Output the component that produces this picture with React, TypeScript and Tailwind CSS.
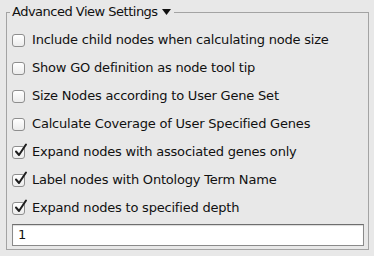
import React from 'react';

const options = [
  { label: 'Include child nodes when calculating node size', checked: false },
  { label: 'Show GO definition as node tool tip', checked: false },
  { label: 'Size Nodes according to User Gene Set', checked: false },
  { label: 'Calculate Coverage of User Specified Genes', checked: false },
  { label: 'Expand nodes with associated genes only', checked: true },
  { label: 'Label nodes with Ontology Term Name', checked: true },
  { label: 'Expand nodes to specified depth', checked: true },
];

function Check({ checked }: { checked: boolean }) {
  return (
    <span className="relative flex h-[13px] w-[13px] shrink-0 rounded-[3px] border border-[#8e8e8e] bg-gradient-to-b from-white to-[#ececec] shadow-[inset_0_1px_0_#fff]">
      {checked && (
        <svg className="absolute -top-[4px] left-[1px]" width="14" height="15" viewBox="0 0 14 15">
          <path d="M2 8.5 L5 12 L12 1.5" fill="none" stroke="#1e1e1e" strokeWidth="2" strokeLinecap="round" strokeLinejoin="round" />
        </svg>
      )}
    </span>
  );
}

export default function App() {
  return (
    <div className="h-[256px] w-[374px] overflow-hidden bg-[#e8e8e8] pt-[4px] pl-[6px] text-[13px] tracking-[-0.2px] text-[#111] [font-family:'DejaVu_Sans',sans-serif]">
      <fieldset className="m-0 h-[246px] w-[363px] border border-[#a3a3a3] pr-[4px] pl-[5px] pb-0 pt-0">
        <legend className="-ml-[2px] flex h-[16px] items-center px-[2px] leading-[16px]">
          <span className="tracking-[-0.5px]">Advanced View Settings</span>
          <svg className="ml-[4px] mr-[1px]" width="9" height="6" viewBox="0 0 9 6">
            <path d="M0 0 H9 L4.5 6 Z" fill="#111" />
          </svg>
        </legend>
        <div className="flex flex-col pt-[6px]">
          {options.map((o) => (
            <label key={o.label} className="flex h-[28px] items-center gap-[7px]">
              <Check checked={o.checked} />
              <span>{o.label}</span>
            </label>
          ))}
          <div className="mt-[2px] flex h-[22px] w-[352px] items-center border border-[#8a8a8a] border-t-[#6e6e6e] bg-white px-[5px] shadow-[inset_0_1px_1px_rgba(0,0,0,0.15)]">
            1
          </div>
        </div>
      </fieldset>
    </div>
  );
}
